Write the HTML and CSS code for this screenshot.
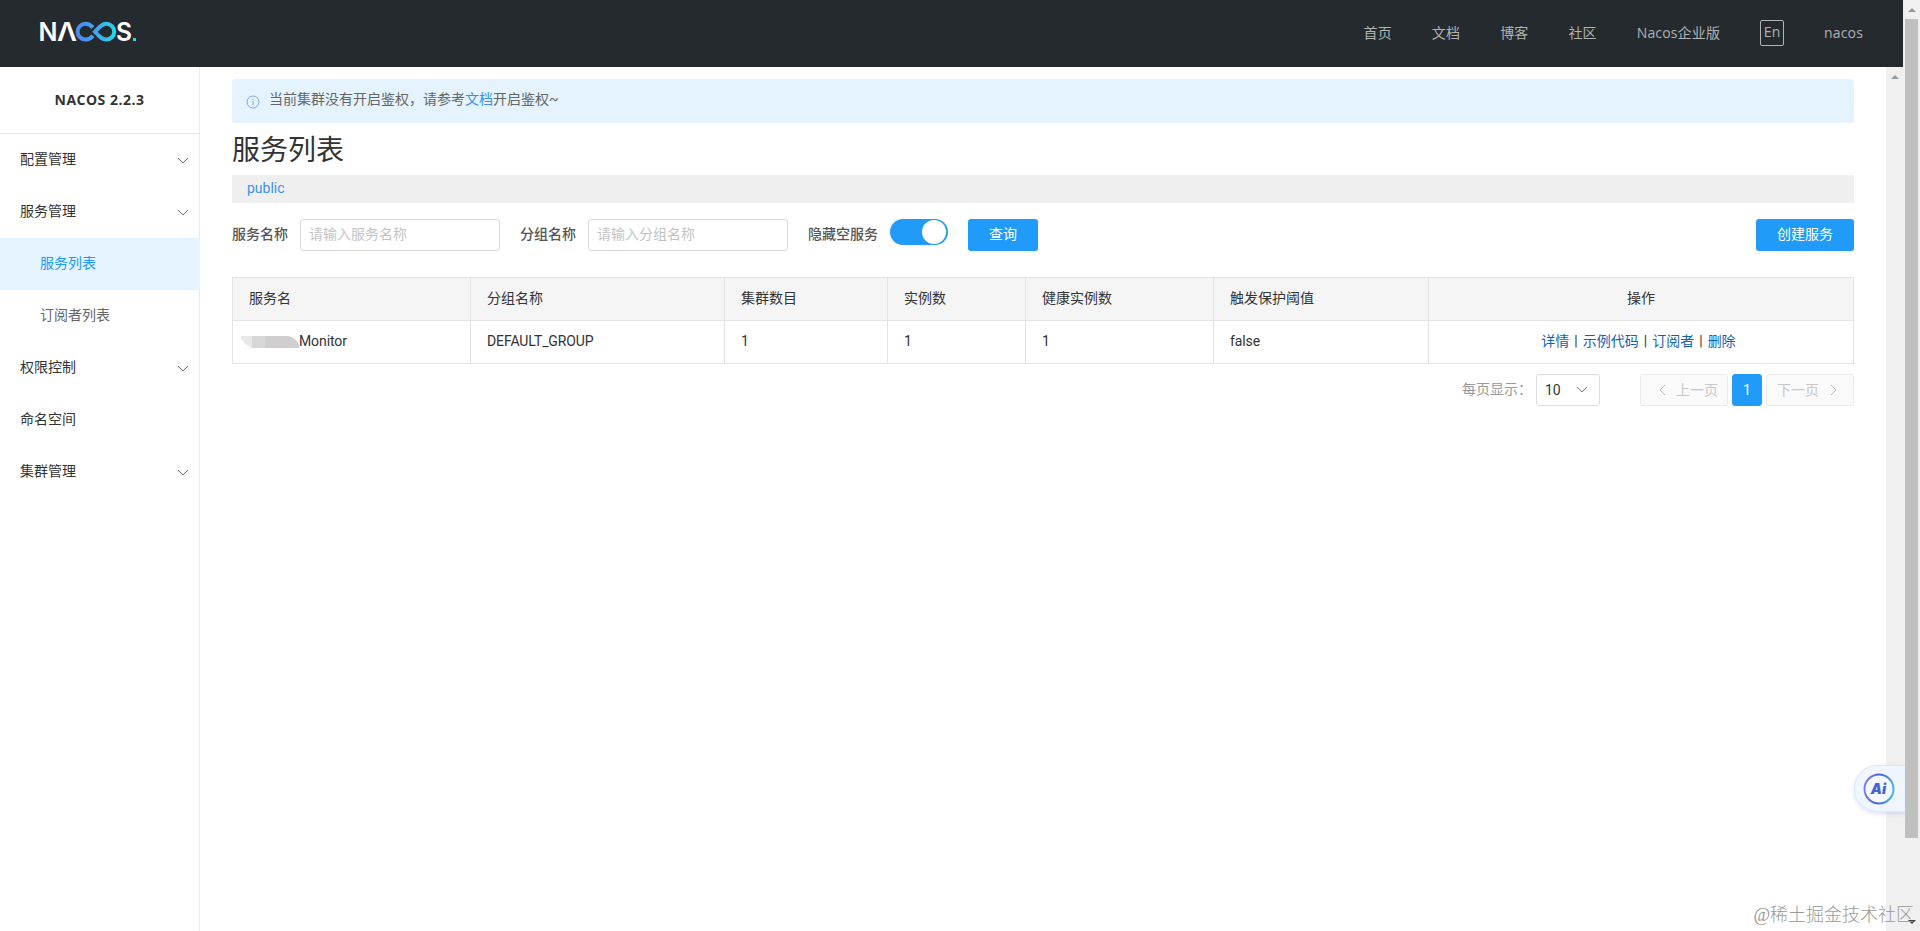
FILE: index.html
```
<!DOCTYPE html>
<html lang="zh-CN">
<head>
  <meta charset="UTF-8">
  <meta name="viewport" content="width=device-width, initial-scale=1.0">
  <title>Nacos</title>
  <link rel="stylesheet" href="styles.css">
</head>
<body>
  <div class="app">
    <header class="header">
      <a class="logo" href="#">
        <svg width="106" height="40" viewBox="-4 -8 106 40">
          <defs>
            <linearGradient id="logoGrad" gradientUnits="userSpaceOnUse" x1="36" y1="0" x2="76" y2="0">
              <stop offset="0" stop-color="#4a86f0"/>
              <stop offset="0.5" stop-color="#3fa5f2"/>
              <stop offset="1" stop-color="#22dbe0"/>
            </linearGradient>
          </defs>
          <text class="logo-text" x="-1.5" y="21" textLength="19" lengthAdjust="spacingAndGlyphs">N</text>
          <text class="logo-text" x="17" y="21" textLength="20" lengthAdjust="spacingAndGlyphs">Λ</text>
          <path d="M53 7.5C50.500 5 48 3.800 45.500 3.800a7.900 7.900 0 0 0 0 15.800c3 0 5.200-1.300 7.500-3.800M55 11.800C59 7.500 62 3.800 66.300 3.800a7.900 7.900 0 0 1 0 15.800C62 19.600 59 16.100 55 11.800z" fill="none" stroke="url(#logoGrad)" stroke-width="4"/>
          <text class="logo-text" x="76" y="21" textLength="16" lengthAdjust="spacingAndGlyphs">S</text>
          <rect x="93" y="18" width="3" height="3" fill="#22dbe0"/>
        </svg>
      </a>
      <nav class="nav">
        <a href="#">首页</a>
        <a href="#">文档</a>
        <a href="#">博客</a>
        <a href="#">社区</a>
        <a href="#">Nacos企业版</a>
        <span class="lang">En</span>
        <a href="#">nacos</a>
      </nav>
    </header>

    <div class="body">
      <aside class="sidebar">
        <h1 class="version">NACOS 2.2.3</h1>
        <ul class="menu">
          <li>配置管理<svg class="arrow" width="12" height="8"><path d="M1 1l5 5 5-5"/></svg></li>
          <li>服务管理<svg class="arrow" width="12" height="8"><path d="M1 1l5 5 5-5"/></svg></li>
          <li class="sub active">服务列表</li>
          <li class="sub">订阅者列表</li>
          <li>权限控制<svg class="arrow" width="12" height="8"><path d="M1 1l5 5 5-5"/></svg></li>
          <li>命名空间</li>
          <li>集群管理<svg class="arrow" width="12" height="8"><path d="M1 1l5 5 5-5"/></svg></li>
        </ul>
      </aside>

      <main class="main">
        <div class="notice">
          <svg class="notice-icon" width="14" height="14" viewBox="0 0 14 14">
            <circle cx="7" cy="7" r="6"/>
            <path d="M7 6v4M7 4v1"/>
          </svg>
          <p>当前集群没有开启鉴权，请参考<a href="#">文档</a>开启鉴权~</p>
        </div>
        <h2 class="title">服务列表</h2>
        <div class="namespace">public</div>

        <form class="filter">
          <label for="service">服务名称</label>
          <input type="text" id="service" placeholder="请输入服务名称">
          <label for="group">分组名称</label>
          <input type="text" id="group" placeholder="请输入分组名称">
          <label>隐藏空服务</label>
          <span class="switch"></span>
          <button type="button">查询</button>
          <button type="button" class="create">创建服务</button>
        </form>

        <table class="table">
          <colgroup>
            <col class="c-name"><col class="c-group"><col class="c-cluster"><col class="c-ip">
            <col class="c-healthy"><col class="c-trigger"><col>
          </colgroup>
          <thead>
            <tr>
              <th>服务名</th>
              <th>分组名称</th>
              <th>集群数目</th>
              <th>实例数</th>
              <th>健康实例数</th>
              <th>触发保护阈值</th>
              <th class="ops">操作</th>
            </tr>
          </thead>
          <tbody>
            <tr>
              <td>
                <div class="service-name">
                  <svg class="mask" width="58" height="12" viewBox="0 0 58 12">
                    <path d="M0 0h12v12C6 11 3 6 0 3z" fill="#e9e8e8"/>
                    <path d="M11 0h36c5 1 9 4 11 9v3H11z" fill="#d0cece"/>
                    <path d="M11 0h13v12H11z" fill="#d8d7d7"/>
                  </svg>Monitor
                </div>
              </td>
              <td>DEFAULT_GROUP</td>
              <td>1</td>
              <td>1</td>
              <td>1</td>
              <td>false</td>
              <td class="ops links"><a href="#">详情</a><i>|</i><a href="#">示例代码</a><i>|</i><a href="#">订阅者</a><i>|</i><a href="#">删除</a></td>
            </tr>
          </tbody>
        </table>

        <div class="pagination">
          <span class="size-label">每页显示：</span>
          <div class="size-select">10<svg class="arrow" width="12" height="8"><path d="M1 1l5 5 5-5"/></svg></div>
          <div class="page prev"><svg class="arrow" width="8" height="12"><path d="M7 1L2 6l5 5"/></svg>上一页</div>
          <div class="page current">1</div>
          <div class="page next">下一页<svg class="arrow" width="8" height="12"><path d="M1 1l5 5-5 5"/></svg></div>
        </div>
      </main>

      <div class="scrollbar inner"><span class="up"></span></div>
    </div>
  </div>

  <div class="scrollbar outer">
    <span class="up"></span>
    <div class="thumb"></div>
    <span class="down"></span>
  </div>

  <!-- Floating assistant button -->
  <div class="assistant">
    <svg width="32" height="32" viewBox="0 0 32 32">
      <defs>
        <linearGradient id="aiGrad" x1="0" y1="0.3" x2="1" y2="0.4">
          <stop offset="0" stop-color="#8b7be0"/>
          <stop offset="0.5" stop-color="#4a5fdc"/>
          <stop offset="1" stop-color="#42b4ee"/>
        </linearGradient>
      </defs>
      <circle cx="16" cy="16" r="14.500" fill="#f4f8ff" stroke="url(#aiGrad)" stroke-width="2"/>
      <text x="15.500" y="21" text-anchor="middle" class="ai-text">Ai</text>
    </svg>
  </div>
  <div class="watermark">@稀土掘金技术社区</div>
</body>
</html>
```
FILE: styles.css
```
* {
  box-sizing: border-box;
}

body {
  margin: 0;
  height: 100vh;
  display: flex;
  overflow: hidden;
  background-color: #fff;
  color: #333;
  font-family: Roboto, "Noto Sans CJK SC", sans-serif;
  font-size: 14px;
  line-height: 20px;
}

a {
  text-decoration: none;
}

.app {
  flex: 1;
  display: flex;
  flex-direction: column;
}

/* Header */
.header {
  height: 67px;
  padding: 0 40px 0 36px;
  display: flex;
  justify-content: space-between;
  background-color: #252a2f;
}

.logo {
  padding-top: 12px;
}

.logo-text {
  font-family: Inter, sans-serif;
  font-size: 25px;
  font-weight: 600;
  fill: #fff;
}

.nav {
  display: flex;
  align-items: center;
  gap: 40px;
  padding-bottom: 2px;
  font-family: "Open Sans", "Noto Sans CJK SC", sans-serif;
  letter-spacing: 0.15px;
  color: #b0b2b4;
}

.nav a {
  color: #b0b2b4;
}

.lang {
  width: 24px;
  height: 26px;
  line-height: 22px;
  border: 1px solid #b0b2b4;
  border-radius: 2px;
  text-align: center;
}

.body {
  flex: 1;
  display: flex;
}

/* Sidebar */
.sidebar {
  width: 200px;
  border-right: 1px solid #ebebeb;
}

.version {
  margin: 0;
  height: 67px;
  line-height: 66px;
  border-bottom: 1px solid #ebebeb;
  text-align: center;
  font-family: "Open Sans", sans-serif;
  font-size: 14px;
  font-weight: 700;
  letter-spacing: 0.5px;
}

.menu {
  margin: 0;
  padding: 0;
  list-style: none;
}

.menu li {
  height: 52px;
  padding: 0 10px 3px 20px;
  display: flex;
  align-items: center;
  justify-content: space-between;
}

.menu .sub {
  padding-left: 40px;
  color: #666;
}

.menu .active {
  margin-right: -1px;
  background-color: #e4f3fe;
  color: #209bfa;
}

.arrow {
  fill: none;
  stroke: #777;
}

.menu .arrow {
  margin-top: 5px;
}

/* Main content */
.main {
  flex: 1;
  padding: 12px 32px 0;
}

.notice {
  height: 44px;
  padding: 10px 14px;
  display: flex;
  gap: 9px;
  border-radius: 3px;
  background-color: #e4f3fe;
  color: #666;
}

.notice p {
  margin: 0;
}

.notice a {
  color: #3b8ff0;
}

.notice-icon {
  margin-top: 6px;
  fill: none;
  stroke: #7fa4f5;
}

.title {
  margin: 8px 0 4px;
  height: 40px;
  line-height: 40px;
  font-size: 28px;
  font-weight: 400;
}

.namespace {
  height: 28px;
  padding-left: 15px;
  line-height: 27px;
  background-color: #efefef;
  color: #3b94f0;
}

.filter {
  margin-top: 16px;
  height: 32px;
  display: flex;
  line-height: 30px;
}

.filter label {
  margin-right: 12px;
  color: #555;
  font-weight: 500;
}

.filter input {
  width: 200px;
  margin-right: 20px;
  padding: 0 8px 2px;
  border: 1px solid #d8d8d8;
  border-radius: 3px;
  font: inherit;
}

.filter input::placeholder {
  color: #c4c4c4;
}

.switch {
  width: 58px;
  height: 26px;
  margin-right: 20px;
  padding: 1px 2px;
  border-radius: 13px;
  background-color: #209bfa;
}

.switch::after {
  content: "";
  display: block;
  width: 24px;
  height: 24px;
  margin-left: auto;
  border-radius: 50%;
  background-color: #fff;
}

.filter button {
  width: 70px;
  padding: 0 0 2px;
  border: none;
  border-radius: 3px;
  background-color: #209bfa;
  color: #fff;
  font: inherit;
}

.filter .create {
  width: 98px;
  margin-left: auto;
}

/* Service table */
.table {
  width: 1622px;
  margin-top: 26px;
  table-layout: fixed;
  border-collapse: separate;
  border-spacing: 0;
  border-top: 1px solid #e3e3e3;
  border-left: 1px solid #e3e3e3;
}

.c-name { width: 238px; }
.c-group { width: 254px; }
.c-cluster { width: 163px; }
.c-ip { width: 138px; }
.c-healthy { width: 188px; }
.c-trigger { width: 215px; }

.table th,
.table td {
  height: 43px;
  padding: 0 16px 2px;
  border-right: 1px solid #e3e3e3;
  border-bottom: 1px solid #e3e3e3;
  text-align: left;
  font-weight: 400;
}

.table td {
  letter-spacing: -0.1px;
}

.table th {
  background-color: #f5f5f5;
}

.table .ops {
  text-align: center;
}

.table .links {
  padding-right: 21px;
  letter-spacing: 0;
}

.ops a {
  color: #0f62b8;
}

.ops i {
  margin: 0 5px;
  font-style: normal;
}

.service-name {
  display: flex;
  align-items: center;
}

.mask {
  margin: 2px 0 0 -8px;
}

/* Pagination */
.pagination {
  margin-top: 10px;
  display: flex;
  justify-content: flex-end;
  line-height: 30px;
}

.size-label {
  margin-right: 4px;
  color: #999;
}

.size-select {
  width: 64px;
  height: 32px;
  margin-right: 40px;
  padding: 0 11px 0 8px;
  display: flex;
  align-items: center;
  justify-content: space-between;
  border: 1px solid #dcdcdc;
  border-radius: 3px;
}

.page {
  width: 88px;
  height: 32px;
  padding-bottom: 1px;
  display: flex;
  align-items: center;
  justify-content: flex-end;
  border: 1px solid #ebebeb;
  border-radius: 3px;
  background-color: #fafafa;
  color: #c8c8c8;
}

.page .arrow {
  stroke: #bbb;
}

.prev {
  padding-right: 9px;
  gap: 10px;
}

.next {
  padding-right: 15px;
  gap: 11px;
}

.current {
  width: 30px;
  margin: 0 4px;
  justify-content: center;
  border-color: #209bfa;
  background-color: #209bfa;
  color: #fff;
}

/* Scrollbars */
.scrollbar {
  width: 17px;
  display: flex;
  flex-direction: column;
  align-items: center;
  background-color: #f0f0f0;
}

.up,
.down {
  border: 4px solid transparent;
  border-top-width: 0;
  border-bottom-color: #999;
  margin-top: 8px;
}

.thumb {
  width: 13px;
  height: 819px;
  margin-top: 7px;
  background-color: #c0c0c0;
}

.down {
  margin: auto 0 7px;
  border-width: 4px 4px 0;
  border-color: #444 transparent;
}

/* Floating items */
.assistant {
  position: absolute;
  right: 15px;
  bottom: 119px;
  width: 51px;
  height: 47px;
  padding: 7px 8px;
  border: 1px solid #dfe8fb;
  border-right: none;
  border-radius: 24px 0 0 24px;
  background-color: #f0f6ff;
  box-shadow: 0 2px 4px rgba(140, 130, 240, 0.25);
  clip-path: inset(-6px 0 -6px -6px);
}

.ai-text {
  font-family: Inter, sans-serif;
  font-size: 14px;
  font-weight: 900;
  font-style: italic;
  fill: #4a5fdc;
}

.watermark {
  position: absolute;
  right: 6px;
  bottom: 4px;
  color: #999;
  font-family: "Liberation Serif", "Noto Sans CJK SC", serif;
  font-size: 18px;
  font-weight: 300;
  line-height: 24px;
}
```
